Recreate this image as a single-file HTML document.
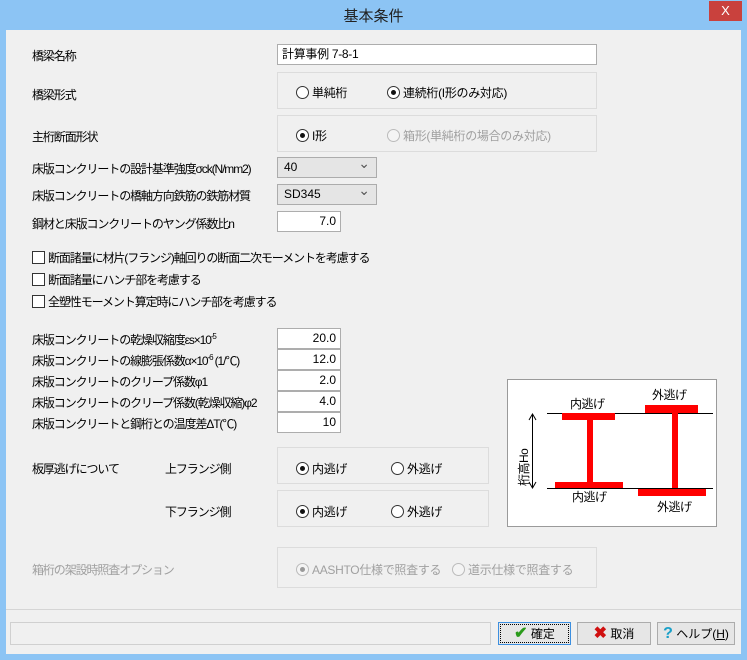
<!DOCTYPE html>
<html><head><meta charset="utf-8">
<style>
*{box-sizing:border-box;margin:0;padding:0}
body{width:747px;height:660px;background:#8cc4f4;font-family:"Liberation Sans","Noto Sans CJK JP",sans-serif;font-size:12px;letter-spacing:-1.1px;color:#000;position:relative;overflow:hidden}
.a{position:absolute;white-space:nowrap}
.r{letter-spacing:-0.3px}
#client{position:absolute;left:6px;top:30px;width:735px;height:624px;background:#f0f0f0}
.title{left:0;top:5px;width:747px;text-align:center;font-size:15px;color:#222;letter-spacing:0}
.close{left:709px;top:1px;width:33px;height:20px;background:#c9413d;color:#fff;text-align:center;font-size:13px;line-height:20px;letter-spacing:0}
.inp{background:#fff;border:1px solid #adadad;height:21px;line-height:19px;padding:0 4px;letter-spacing:-0.3px}
.num{text-align:right;padding-right:4px;letter-spacing:0}
.grp{border:1px solid #dcdcdc}
.sel{background:#e5e5e5;border:1px solid #acacac;height:21px;line-height:19px;padding:0 6px;font-size:12px;letter-spacing:0}
.sel:after{content:"⌄";position:absolute;right:6px;top:-4px;font-size:14px;color:#555}
.rad{width:13px;height:13px;border:1px solid #333;border-radius:50%;background:#fff;display:inline-block;vertical-align:-2px;margin-right:3px;position:relative}
.rad.on:after{content:"";position:absolute;left:3px;top:3px;width:5px;height:5px;border-radius:50%;background:#111}
.rad.dis{border-color:#bbb;background:#f4f4f4}
.rad.dis.on:after{background:#999}
.chk{width:13px;height:13px;border:1px solid #333;background:#fff;display:inline-block;vertical-align:-2px;margin-right:3px}
.gray{color:#a0a0a0}
.btn{height:23px;border:1px solid #acacac;background:#e6e6e6;text-align:center;line-height:21px;letter-spacing:0}
svg text{letter-spacing:-0.5px}
</style></head><body>
<div class="a title">基本条件</div>
<div class="a close">X</div>
<div id="client"></div>

<div class="a" style="left:32px;top:47px">橋梁名称</div>
<div class="a inp" style="left:277px;top:44px;width:320px">計算事例 7-8-1</div>

<div class="a" style="left:32px;top:86px">橋梁形式</div>
<div class="a grp" style="left:277px;top:72px;width:320px;height:37px"></div>
<div class="a r" style="left:296px;top:84px"><span class="rad"></span>単純桁</div>
<div class="a r" style="left:387px;top:84px"><span class="rad on"></span>連続桁(I形のみ対応)</div>

<div class="a" style="left:32px;top:128px">主桁断面形状</div>
<div class="a grp" style="left:277px;top:115px;width:320px;height:37px"></div>
<div class="a r" style="left:296px;top:127px"><span class="rad on"></span>I形</div>
<div class="a gray r" style="left:387px;top:127px"><span class="rad dis"></span>箱形(単純桁の場合のみ対応)</div>

<div class="a" style="left:32px;top:160px">床版コンクリートの設計基準強度σck(N/mm2)</div>
<div class="a sel" style="left:277px;top:157px;width:100px">40</div>
<div class="a" style="left:32px;top:187px">床版コンクリートの橋軸方向鉄筋の鉄筋材質</div>
<div class="a sel" style="left:277px;top:184px;width:100px">SD345</div>
<div class="a" style="left:32px;top:215px">鋼材と床版コンクリートのヤング係数比n</div>
<div class="a inp num" style="left:277px;top:211px;width:64px">7.0</div>

<div class="a" style="left:32px;top:249px"><span class="chk"></span>断面諸量に材片(フランジ)軸回りの断面二次モーメントを考慮する</div>
<div class="a" style="left:32px;top:271px"><span class="chk"></span>断面諸量にハンチ部を考慮する</div>
<div class="a" style="left:32px;top:293px"><span class="chk"></span>全塑性モーメント算定時にハンチ部を考慮する</div>

<div class="a" style="left:32px;top:331px">床版コンクリートの乾燥収縮度εs×10<sup style="font-size:8px">-5</sup></div>
<div class="a inp num" style="left:277px;top:328px;width:64px;height:21px">20.0</div>
<div class="a" style="left:32px;top:352px">床版コンクリートの線膨張係数α×10<sup style="font-size:8px">-6</sup> (1/℃)</div>
<div class="a inp num" style="left:277px;top:349px;width:64px;height:21px">12.0</div>
<div class="a" style="left:32px;top:373px">床版コンクリートのクリープ係数φ1</div>
<div class="a inp num" style="left:277px;top:370px;width:64px;height:21px">2.0</div>
<div class="a" style="left:32px;top:394px">床版コンクリートのクリープ係数(乾燥収縮)φ2</div>
<div class="a inp num" style="left:277px;top:391px;width:64px;height:21px">4.0</div>
<div class="a" style="left:32px;top:415px">床版コンクリートと鋼桁との温度差ΔT(℃)</div>
<div class="a inp num" style="left:277px;top:412px;width:64px;height:21px">10</div>

<div class="a" style="left:32px;top:460px">板厚逃げについて</div>
<div class="a" style="left:165px;top:460px">上フランジ側</div>
<div class="a grp" style="left:277px;top:447px;width:212px;height:37px"></div>
<div class="a r" style="left:296px;top:460px"><span class="rad on"></span>内逃げ</div>
<div class="a r" style="left:391px;top:460px"><span class="rad"></span>外逃げ</div>
<div class="a" style="left:165px;top:503px">下フランジ側</div>
<div class="a grp" style="left:277px;top:490px;width:212px;height:37px"></div>
<div class="a r" style="left:296px;top:503px"><span class="rad on"></span>内逃げ</div>
<div class="a r" style="left:391px;top:503px"><span class="rad"></span>外逃げ</div>

<div class="a gray" style="left:32px;top:561px">箱桁の架設時照査オプション</div>
<div class="a grp" style="left:277px;top:547px;width:320px;height:41px"></div>
<div class="a gray r" style="left:296px;top:561px"><span class="rad dis on"></span>AASHTO仕様で照査する</div>
<div class="a gray r" style="left:452px;top:561px"><span class="rad dis"></span>道示仕様で照査する</div>

<svg class="a" style="left:507px;top:379px" width="210" height="148" viewBox="507 379 210 148">
<rect x="507.5" y="379.5" width="209" height="147" fill="#fff" stroke="#9a9a9a"/>
<line x1="547" y1="413.5" x2="713" y2="413.5" stroke="#000"/>
<line x1="547" y1="488.5" x2="713" y2="488.5" stroke="#000"/>
<rect x="562" y="413" width="53" height="7" fill="#f00"/>
<rect x="587" y="420" width="6" height="62" fill="#f00"/>
<rect x="555" y="482" width="68" height="6" fill="#f00"/>
<rect x="645" y="405" width="53" height="8" fill="#f00"/>
<rect x="672" y="413" width="6" height="75" fill="#f00"/>
<rect x="638" y="489" width="68" height="7" fill="#f00"/>
<line x1="532.5" y1="414" x2="532.5" y2="488" stroke="#000"/>
<path d="M529 420 L532.5 414 L536 420 M529 482 L532.5 488 L536 482" fill="none" stroke="#000"/>
<text x="570" y="408" font-size="12" font-family="Liberation Sans,Noto Sans CJK JP,sans-serif">内逃げ</text>
<text x="652" y="399" font-size="12" font-family="Liberation Sans,Noto Sans CJK JP,sans-serif">外逃げ</text>
<text x="572" y="501" font-size="12" font-family="Liberation Sans,Noto Sans CJK JP,sans-serif">内逃げ</text>
<text x="657" y="511" font-size="12" font-family="Liberation Sans,Noto Sans CJK JP,sans-serif">外逃げ</text>
<text transform="translate(528,486) rotate(-90)" font-size="12" font-family="Liberation Sans,Noto Sans CJK JP,sans-serif">桁高Ho</text>
</svg>

<div class="a" style="left:6px;top:609px;width:735px;border-top:1px solid #d5d5d5"></div>
<div class="a" style="left:10px;top:622px;width:481px;height:23px;border:1px solid #d0d0d0"></div>
<div class="a btn" style="left:498px;top:622px;width:73px;border:1px solid #3c8fe0;outline:1px dotted #000;outline-offset:-3px"><span style="color:#2a9a1a;font-size:16px;font-weight:bold">✔</span> 確定</div>
<div class="a btn" style="left:577px;top:622px;width:74px"><span style="color:#d01010;font-size:16px;font-weight:bold">✖</span> 取消</div>
<div class="a btn" style="left:657px;top:622px;width:78px"><span style="color:#1aa0c8;font-size:16px;font-weight:bold">?</span> ヘルプ(<u>H</u>)</div>
</body></html>
